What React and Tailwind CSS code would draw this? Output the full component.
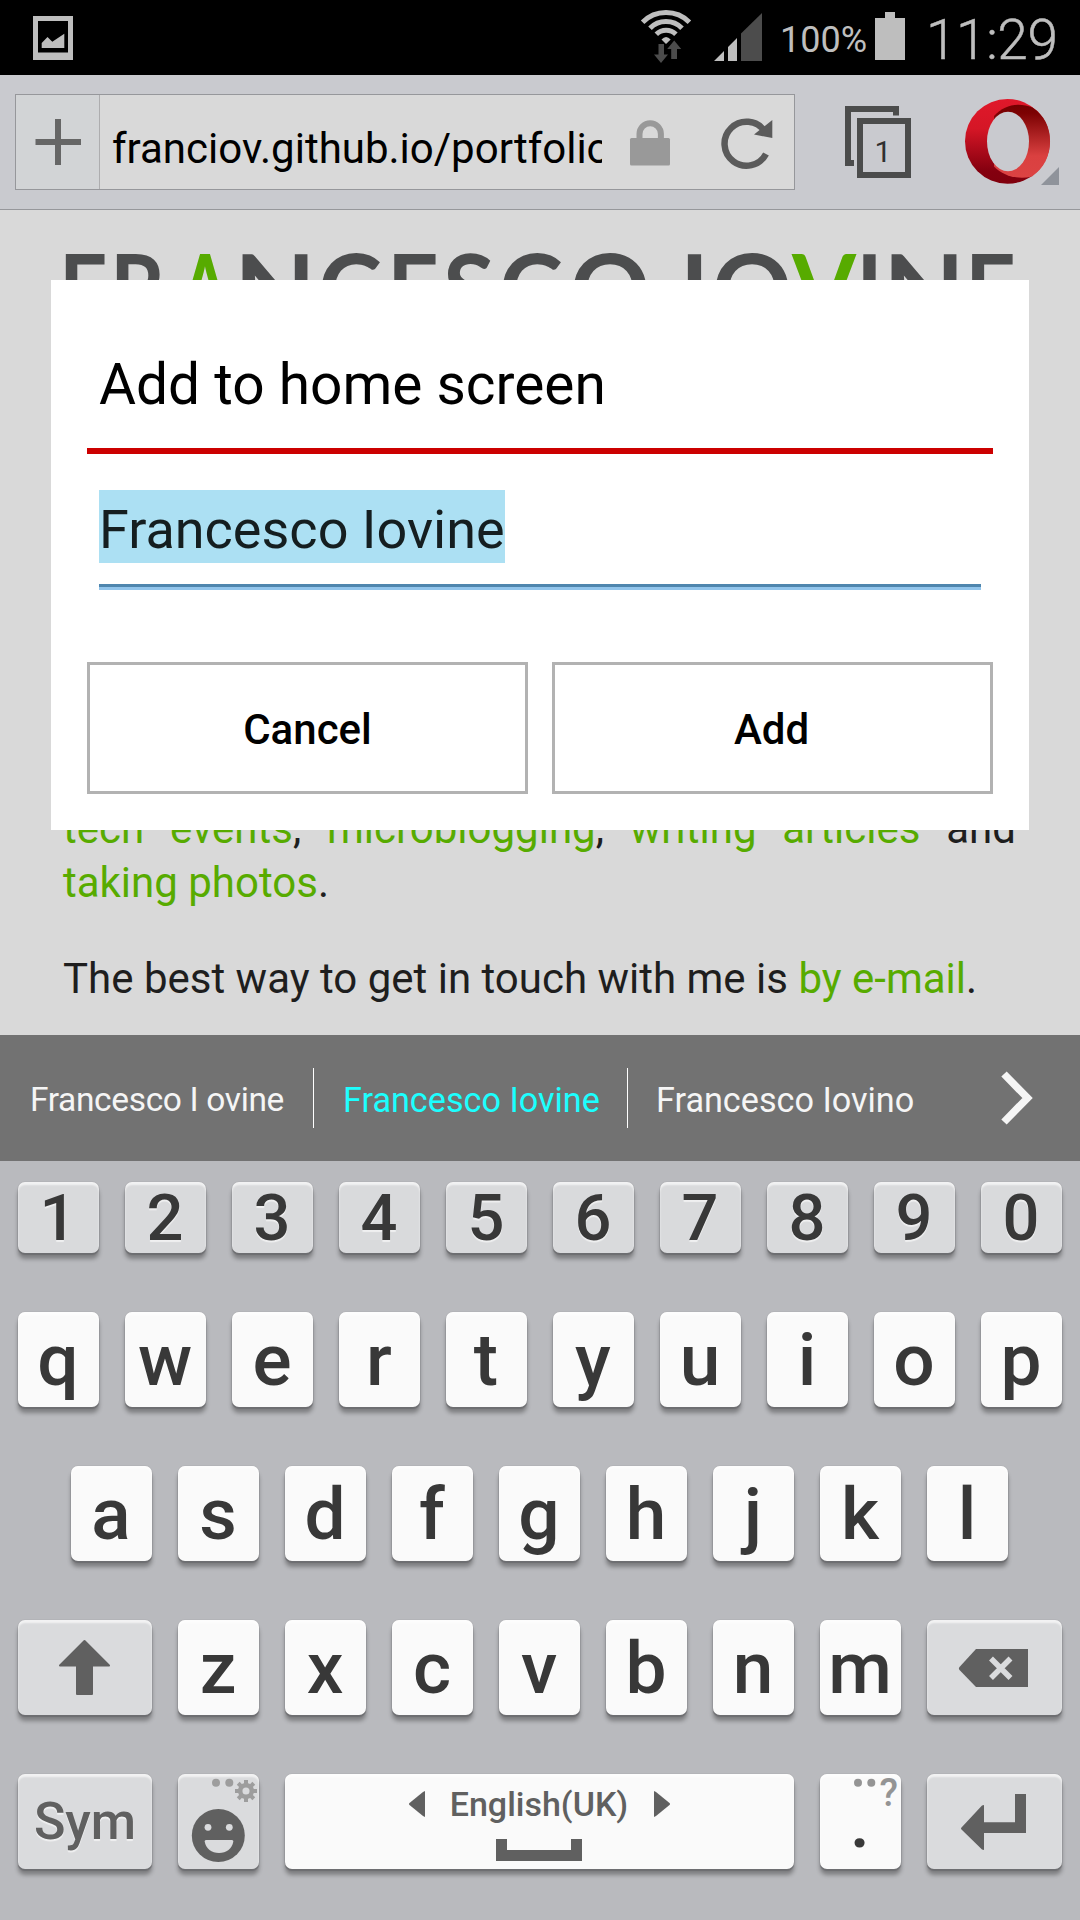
const TITLE = [
  { ch: 'F', left: 59, w: 48 },
  { ch: 'R', left: 110, w: 55 },
  { ch: 'A', left: 180, w: 50, green: true },
  { ch: 'N', left: 234, w: 82 },
  { ch: 'C', left: 318, w: 64 },
  { ch: 'E', left: 387, w: 52 },
  { ch: 'S', left: 443, w: 52 },
  { ch: 'C', left: 499, w: 64 },
  { ch: 'O', left: 570, w: 80 },
  { ch: 'I', left: 680, w: 29 },
  { ch: 'O', left: 712, w: 80 },
  { ch: 'V', left: 792, w: 64, green: true },
  { ch: 'I', left: 856, w: 27 },
  { ch: 'N', left: 883, w: 82 },
  { ch: 'E', left: 965, w: 51 },
];

const KEY_SHADOW =
  'shadow-[0_2px_1px_#6d6e71,0_6px_4px_rgba(0,0,0,0.32),0_0_1px_rgba(0,0,0,0.3),inset_0_3px_2px_rgba(255,255,255,0.65)]';

function Key({ children, className = 'w-[81px] bg-[#fafafa]' }) {
  return (
    <div className={`relative h-[95px] shrink-0 rounded-[7px] text-center indent-[-1px] text-[73px] font-medium leading-[96px] text-[#383838] ${KEY_SHADOW} ${className}`}>
      {children}
    </div>
  );
}

function StatusBar() {
  return (
    <div className="flex h-[75px] shrink-0 items-start bg-black text-[#bebebe]">
      <svg className="ml-[33px] mt-4 h-11 w-10" viewBox="33 16 40 44">
        <path fillRule="evenodd" fill="#bebebe" d="M33 16h40v44H33zM38 21v31.500h30V21z" />
        <path fill="#bebebe" d="M41.700 48V43l5.800-6 4.800 4.700 12-8V48z" />
      </svg>
      <svg className="ml-[565px] h-[75px] w-[56px]" viewBox="638 0 56 75">
        <g fill="none" stroke="#bebebe" strokeWidth="5">
          <path d="M642.600 22.200a33 33 0 0 1 46.800 0" />
          <path d="M650 28.300a22.500 22.500 0 0 1 32 0" />
          <path d="M656.300 34.300a14 14 0 0 1 19.600 0" />
        </g>
        <path fill="#bebebe" d="M661.500 39.500q4.500-5 9.200 0L666 44z" />
        <path fill="#4c4c4c" d="M658.500 44h5.500v10.500h4L661 63l-7-8.500h4.500zM671.200 59V49h-4l7-8.500 7 8.500h-4.200v10z" />
      </svg>
      <svg className="ml-[20px] h-[75px] w-[48px]" viewBox="714 0 48 75">
        <path fill="#bebebe" d="M714 61l10-10v10zM728 61V47l9-9v23z" />
        <path fill="#4c4c4c" d="M741 61V33.500L762 13v48z" />
      </svg>
      <span className="ml-[18px] w-[92px] whitespace-nowrap text-[36px] leading-[80px]">100%</span>
      <svg className="ml-[3px] h-[75px] w-[30px]" viewBox="875 0 30 75">
        <path fill="#bebebe" d="M885 12h10v6h10v42h-30V18h10z" />
      </svg>
      <span className="ml-[21px] whitespace-nowrap text-[55px] font-light leading-[81px] tracking-[-0.4px] [-webkit-text-stroke:0.5px_#bebebe]">11:29</span>
    </div>
  );
}

function Toolbar() {
  return (
    <div className="flex h-[135px] shrink-0 items-start border-b border-[#96979b] bg-[#c9cacf]">
      <div className="ml-[15px] mt-[19px] flex h-[96px] w-[780px] border border-[#96979b] bg-[#d9d9d9]">
        <svg className="h-[94px] w-[84px] shrink-0 border-r border-[#adadaf] bg-[#d2d4d6]" viewBox="16 95 83 94">
          <path fill="#666" d="M55 119h6v20h20v6H61v20h-6v-20H35.500v-6H55z" />
        </svg>
        <div className="ml-[12px] w-[490px] overflow-hidden whitespace-nowrap text-[42px] leading-[108px] text-black">
          franciov.github.io/portfolio
        </div>
        <svg className="ml-[14px] h-[94px] w-[178px]" viewBox="616 95 178 94">
          <rect x="630" y="138" width="40" height="27.500" rx="1.500" fill="#999" />
          <path d="M639.500 139v-5a10.700 10.700 0 0 1 21.400 0v5" fill="none" stroke="#999" strokeWidth="6" />
          <path d="M764.500 131.500a22 22 0 1 0 1.500 23" transform="translate(0 -0.500)" fill="none" stroke="#5b5b5b" strokeWidth="6.500" />
          <path fill="#5b5b5b" d="M772.300 120v18l-18.300-3.500z" />
        </svg>
      </div>
      <div className="relative ml-[50px] mt-[31px] h-[72px] w-[66px]">
        <svg className="h-[72px] w-[66px]" viewBox="845 106 66 72">
          <path fill="#4b4c4c" d="M845 106h54v9.500h-6V112h-42v48h3v6h-9z" />
          <rect x="860" y="121" width="48" height="54" fill="none" stroke="#4b4c4c" strokeWidth="6" />
        </svg>
        <span className="absolute left-[11px] top-[27px] w-[54px] text-center text-[30px] leading-[37px] text-[#303030]">1</span>
      </div>
      <svg className="ml-[54px] mt-[23px] h-[88px] w-[94px]" viewBox="965 98 94 88">
        <defs>
          <linearGradient id="ring" x1="0" y1="0" x2="0" y2="1">
            <stop offset="0" stopColor="#e0182a" />
            <stop offset="0.35" stopColor="#d51626" />
            <stop offset="0.85" stopColor="#84000f" />
            <stop offset="1" stopColor="#80000d" />
          </linearGradient>
          <linearGradient id="inner" x1="0" y1="0" x2="0" y2="1">
            <stop offset="0" stopColor="#730000" />
            <stop offset="0.12" stopColor="#7d0203" />
            <stop offset="0.7" stopColor="#da4040" />
            <stop offset="1" stopColor="#dc4343" />
          </linearGradient>
        </defs>
        <ellipse cx="1007.500" cy="141.300" rx="42.500" ry="42.400" fill="url(#ring)" />
        <path fill="url(#inner)" d="M994 116C1004 105 1018 102 1032.500 107.500C1044 115 1050 127 1050 141.300C1050 156 1044 168 1032 176.500C1018 180 1003 176 994 166.500z" />
        <ellipse cx="1008" cy="141.500" rx="21" ry="29.800" fill="#c9cacf" />
        <path fill="#8f939b" d="M1059 167v18h-18z" />
      </svg>
    </div>
  );
}

function Page() {
  return (
    <div className="relative h-[825px] shrink-0 overflow-hidden bg-[#d9d9d9]">
      <h1 className="relative h-[100px]">
        {TITLE.map((t, i) => (
          <svg
            key={i}
            className="absolute top-[30px] h-[100px] overflow-visible"
            style={{ left: t.left, width: t.w }}
          >
            <text
              x="0"
              y="85"
              textLength={t.w}
              lengthAdjust="spacingAndGlyphs"
              className={t.green ? 'fill-[#57ab00] font-[Lato] text-[98px] font-bold' : 'fill-[#4c4d4e] font-[Lato] text-[98px] font-bold'}
            >
              {t.ch}
            </text>
          </svg>
        ))}
      </h1>
      <div className="mt-[492px] pl-[63px] text-[42px] leading-[54px] text-[#1e1e1e]">
        <p className="w-[953px] [text-align-last:justify] text-[#57ab00]">
          tech events<span className="text-[#1e1e1e]">,</span> microblogging<span className="text-[#1e1e1e]">,</span> writing articles <span className="text-[#1e1e1e]">and</span>
        </p>
        <p><span className="text-[#57ab00]">taking photos</span>.</p>
        <p className="mt-[42px] whitespace-nowrap">
          The best way to get in touch with me is <span className="text-[#57ab00]">by e-mail</span>.
        </p>
      </div>
    </div>
  );
}

function Dialog() {
  return (
    <div className="absolute left-[51px] top-[280px] h-[550px] w-[978px] bg-white px-9 text-black">
      <h2 className="h-[174px] border-b-[6px] border-[#c00] pl-3 text-[56.800px] leading-[209px]">
        <span className="whitespace-nowrap">Add to home screen</span>
      </h2>
      <div className="mx-3 mt-9 h-[97px] border-b-[3px] border-[#4f86ae]">
        <span className="inline-block h-[73px] w-[406px] whitespace-nowrap bg-[#ace0f3] text-[54px] leading-[79px] text-[#151e20]">Francesco Iovine</span>
      </div>
      <div className="mx-3 h-[3px] bg-[#92c5ec]" />
      <div className="mt-[72px] flex gap-6 text-[42px] font-medium leading-[129px]">
        <button className="h-[132px] w-[441px] border-[3px] border-[#b2b2b2]">Cancel</button>
        <button className="h-[132px] w-[441px] border-[3px] border-[#b2b2b2] indent-[-2px]">Add</button>
      </div>
    </div>
  );
}

function Suggestions() {
  return (
    <div className="flex h-[126px] shrink-0 items-center bg-[#727272] text-[34.200px] leading-[126px] text-[#f5f5f5]">
      <span className="w-[313px] shrink-0 whitespace-nowrap pl-[30px] pt-[3px] text-[33.500px] tracking-[-0.350px]">Francesco I ovine</span>
      <span className="h-[60px] w-px shrink-0 bg-white" />
      <span className="w-[313px] shrink-0 whitespace-nowrap pl-[29px] pt-[3px] text-[#1cffff]">Francesco Iovine</span>
      <span className="h-[60px] w-px shrink-0 bg-white" />
      <span className="w-[372px] shrink-0 whitespace-nowrap pl-[28px] pt-[3px]">Francesco Iovino</span>
      <svg className="h-[56px] w-[34px]" viewBox="1000 1070.500 34 56">
        <path d="M1004 1074.500l23.500 24-23.500 24" fill="none" stroke="#f5f5f5" strokeWidth="7.500" />
      </svg>
    </div>
  );
}

const GREY = 'bg-[#dadbdd]';

function Keyboard() {
  return (
    <div className="flex h-[759px] shrink-0 flex-col bg-[#b9babe] px-[18px] pt-[21px]">
      <div className="flex gap-[26px]">
        {'1234567890'.split('').map((k) => (
          <div key={k} className={`h-[71px] w-[81px] shrink-0 rounded-[7px] bg-[#d9dadc] text-center indent-[-1px] text-[65px] font-medium leading-[72px] text-[#383838] [text-shadow:0_2px_1px_rgba(255,255,255,0.6)] ${KEY_SHADOW}`}>
            {k}
          </div>
        ))}
      </div>
      <div className="mt-[59px] flex gap-[26px]">
        {'qwertyuiop'.split('').map((k) => <Key key={k}>{k}</Key>)}
      </div>
      <div className="mt-[59px] flex gap-[26px] pl-[53px]">
        {'asdfghjkl'.split('').map((k) => <Key key={k}>{k}</Key>)}
      </div>
      <div className="mt-[59px] flex gap-[26px]">
        <Key className={`w-[134px] ${GREY}`}>
          <svg className="h-[95px] w-[134px]" viewBox="18 1620 134 95">
            <path fill="#606060" stroke="#606060" strokeWidth="2" strokeLinejoin="round" d="M84.500 1641l24.500 24.500h-17v28.500h-15v-28.500h-17z" />
          </svg>
        </Key>
        {'zxcvbnm'.split('').map((k) => <Key key={k}>{k}</Key>)}
        <Key className={`w-[135px] ${GREY}`}>
          <svg className="h-[95px] w-[135px]" viewBox="927 1620 135 95">
            <path fill="#606060" d="M959.500 1670q-1.200-1.500 0-3L976 1649h52v38h-52z" />
            <path d="M991 1658.500l19.500 19.500M1010.500 1658.500l-19.500 19.500" stroke="#dadbdd" strokeWidth="5.500" />
          </svg>
        </Key>
      </div>
      <div className="mt-[59px] flex gap-[26px]">
        <Key className={`w-[134px] ${GREY}`}>
          <span className="block indent-0 text-[52px] leading-[95px] text-[#606060] [text-shadow:0_2px_1px_rgba(255,255,255,0.6)]">Sym</span>
        </Key>
        <Key className={`w-[81px] ${GREY}`}>
          <svg className="h-[95px] w-[81px]" viewBox="178 1774 81 95">
            <g fill="#9d9d9d">
              <circle cx="216" cy="1782.700" r="4" />
              <circle cx="229.300" cy="1782.700" r="4" />
            </g>
            <circle cx="246" cy="1791" r="5.800" fill="none" stroke="#9d9d9d" strokeWidth="4.500" />
            <g stroke="#9d9d9d" strokeWidth="4">
              {[0, 45, 90, 135, 180, 225, 270, 315].map((a) => (
                <path key={a} d="M246 1784v-4" transform={`rotate(${a} 246 1791)`} />
              ))}
            </g>
            <circle cx="218.300" cy="1835.500" r="26.500" fill="#606060" />
            <circle cx="208" cy="1827.300" r="3.400" fill="#dadbdd" />
            <circle cx="229.300" cy="1827.300" r="3.400" fill="#dadbdd" />
            <path fill="#dadbdd" d="M206 1840h26q1.500 0 1.300 1.500c-1 7-7 11.500-14.300 11.500s-13.300-4.500-14.300-11.500q-.2-1.500 1.300-1.500z" />
          </svg>
        </Key>
        <Key className="w-[509px] bg-[#fafafa]">
          <div className="flex h-[60px] items-center justify-center indent-0">
            <svg className="mr-[25px] h-[26px] w-[16px]" viewBox="0 0 16 26"><path fill="#606060" d="M16 0v26L14 25 .5 14q-1-1 0-2L14 1z" /></svg>
            <span className="mr-px whitespace-nowrap text-[34px] leading-[60px] text-[#606060]">English(UK)</span>
            <svg className="ml-[25px] h-[26px] w-[16px]" viewBox="0 0 16 26"><path fill="#606060" d="M0 0v26l2-1 13.500-11q1-1 0-2L2 1z" /></svg>
          </div>
          <svg className="ml-[211px] mt-[5px] h-[22px] w-[86px]" viewBox="0 0 86 22"><path fill="#606060" d="M0 0h11v11h64V0h11v22H0z" /></svg>
        </Key>
        <Key>
          .
          <svg className="absolute left-0 top-0 h-[20px] w-[81px]" viewBox="820 1774 81 20">
            <circle cx="858" cy="1782.700" r="4" fill="#949494" />
            <circle cx="871.300" cy="1782.700" r="4" fill="#949494" />
          </svg>
          <span className="absolute right-[3px] top-0 indent-0 text-[38px] leading-[39px] text-[#949494]">?</span>
        </Key>
        <Key className={`w-[135px] ${GREY}`}>
          <svg className="h-[95px] w-[135px]" viewBox="927 1774 135 95">
            <path fill="#606060" d="M961.500 1829.500q-1-1 0-2L982 1805.500l2-.5v17.300h31V1794h11v39h-42v17l-2-.5z" />
          </svg>
        </Key>
      </div>
    </div>
  );
}

export default function App() {
  return (
    <div className="relative flex h-[1920px] w-[1080px] flex-col overflow-hidden bg-[#d9d9d9] font-[Roboto,sans-serif]">
      <StatusBar />
      <Toolbar />
      <Page />
      <Suggestions />
      <Keyboard />
      <Dialog />
    </div>
  );
}
